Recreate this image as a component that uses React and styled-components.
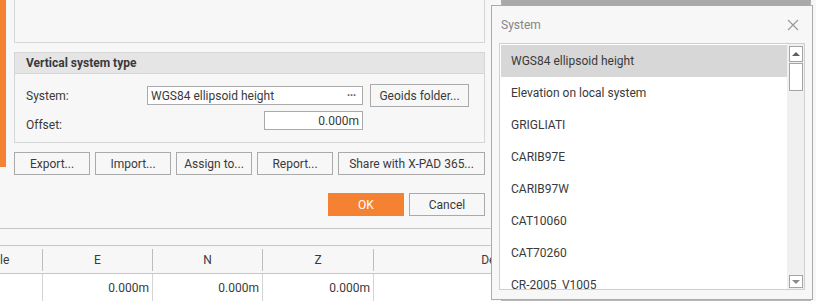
import React from "react";
import styled, { createGlobalStyle } from "styled-components";

const GlobalStyle = createGlobalStyle`
  html, body {
    margin: 0;
    padding: 0;
    background: #f7f7f7;
  }
  * {
    box-sizing: border-box;
  }
`;

const Page = styled.div`
  position: relative;
  width: 816px;
  height: 301px;
  overflow: hidden;
  background: #f7f7f7;
  font-family: Roboto, "Liberation Sans", sans-serif;
  font-size: 12px;
  color: #3a3a3a;
`;

// DIALOG
const Dialog = styled.div`
  width: 491px;
  height: 229px;
  display: flex;
  align-items: flex-start;
  border-bottom: 1px solid #c6c6c6;
`;

const Strip = styled.div`
  width: 6px;
  height: 167px;
  background: #f58233;
  flex-shrink: 0;
`;

const Body = styled.div`
  margin-left: 8px;
  width: 471px;
  display: flex;
  flex-direction: column;
`;

const TopBox = styled.div`
  height: 43px;
  border: 1px solid #d6d6d6;
  border-top: none;
`;

const Group = styled.div`
  margin-top: 9px;
  border: 1px solid #d6d6d6;
`;

const GroupHeader = styled.div`
  height: 21px;
  background: #e5e5e5;
  border-bottom: 1px solid #d6d6d6;
  padding-left: 11px;
  display: flex;
  align-items: center;
  font-weight: bold;
  color: #3a3a3a;
`;

const Fields = styled.div`
  display: grid;
  grid-template-columns: 121px 117px 99px 7px 99px;
  grid-template-rows: 23px 19px;
  row-gap: 4px;
  align-items: center;
  padding: 10px 0 12px 11px;
`;

const Label = styled.div`
  grid-column: 1;
  padding-top: ${(p) => p.shift || 0}px;
`;

const Input = styled.div`
  grid-column: ${(p) => p.col};
  height: 19px;
  background: #fff;
  border: 1px solid #aaaaaa;
  display: flex;
  align-items: center;
  justify-content: ${(p) => (p.right ? "flex-end" : "space-between")};
  padding: 0 3px 0 3px;
  color: #3a3a3a;
`;

const Dots = styled.span`
  color: #666;
  font-size: 12px;
  font-weight: bold;
  letter-spacing: -0.5px;
  margin-right: 3px;
`;

const Button = styled.button`
  width: ${(p) => p.w || 76}px;
  height: 23px;
  padding: 0;
  border: ${(p) => (p.primary ? "none" : "1px solid #aaaaaa")};
  background: ${(p) => (p.primary ? "#f58233" : "#f7f7f7")};
  color: ${(p) => (p.primary ? "#fff" : "#3a3a3a")};
  font-family: Roboto, "Liberation Sans", sans-serif;
  font-size: 12px;
  grid-column: ${(p) => p.col || "auto"};
`;

const ButtonRow = styled.div`
  margin-top: ${(p) => p.top}px;
  display: flex;
  gap: 5px;
  justify-content: ${(p) => (p.end ? "flex-end" : "flex-start")};
`;

// TABLE (scrolled horizontally, clipped where the popup begins)
const Table = styled.div`
  margin-top: 16px;
  width: 491px;
  overflow: hidden;
  border-top: 1px solid #c6c6c6;
`;

const HeaderRow = styled.div`
  display: flex;
  height: 28px;
  align-items: center;
  border-bottom: 1px solid #c6c6c6;
`;

const HeaderCell = styled.div`
  width: ${(p) => p.w}px;
  flex-shrink: 0;
  height: 22px;
  display: flex;
  align-items: center;
  justify-content: ${(p) => (p.left ? "flex-start" : "center")};
  border-right: 1px solid #bdbdbd;
  color: #3a3a3a;
  white-space: nowrap;
`;

const DataRow = styled.div`
  display: flex;
  height: 28px;
  background: #fff;
`;

const DataCell = styled.div`
  width: ${(p) => p.w}px;
  flex-shrink: 0;
  display: flex;
  align-items: center;
  justify-content: flex-end;
  padding-right: 3px;
  border-right: 1px solid #d4d4d4;
`;

// BACKGROUND WINDOW + POPUP
const BackPanel = styled.div`
  position: absolute;
  left: 501px;
  top: 0;
  width: 310px;
  height: 301px;
  background: #f0f0f0;
  border: 1px solid #b8b8b8;
  border-top: 5px solid #a9a9a9;
`;

const Popup = styled.div`
  position: absolute;
  left: 491px;
  top: 5px;
  width: 322px;
  height: 295px;
  background: #f7f7f7;
  border: 1px solid #ababab;
  display: flex;
  flex-direction: column;
`;

const PopupTitle = styled.div`
  height: 37px;
  display: flex;
  align-items: center;
  justify-content: space-between;
  padding: 0 13px 0 9px;
  color: #858585;
`;

const Close = styled.svg`
  width: 12px;
  height: 12px;
`;

const ListBox = styled.div`
  margin: 0 7px;
  height: 247px;
  background: #fff;
  border: 1px solid #cfcfcf;
  display: flex;
`;

const Items = styled.div`
  flex: 1;
  padding: 1px 0 0 1px;
  overflow: hidden;
`;

const Item = styled.div`
  height: 32px;
  display: flex;
  align-items: center;
  padding-left: 10px;
  background: ${(p) => (p.selected ? "#d7d7d7" : "#fff")};
  color: #3a3a3a;
`;

const Scrollbar = styled.div`
  width: 17px;
  background: #f0f0f0;
  display: flex;
  flex-direction: column;
  align-items: center;
  padding: 2px 0 1px;
`;

const ScrollButton = styled.div`
  width: 14px;
  height: ${(p) => p.h}px;
  background: #fff;
  border: 1px solid #a4a4a4;
  display: flex;
  align-items: center;
  justify-content: center;
  margin-top: ${(p) => (p.push ? "auto" : "0")};
`;

const Thumb = styled.div`
  width: 14px;
  height: 28px;
  margin-top: 1px;
  background: #fff;
  border: 1px solid #a4a4a4;
`;

const Arrow = styled.div`
  width: 0;
  height: 0;
  border-left: 4px solid transparent;
  border-right: 4px solid transparent;
  ${(p) =>
    p.down
      ? "border-top: 4px solid #8a8a8a;"
      : "border-bottom: 4px solid #606060;"}
`;

const systems = [
  "WGS84 ellipsoid height",
  "Elevation on local system",
  "GRIGLIATI",
  "CARIB97E",
  "CARIB97W",
  "CAT10060",
  "CAT70260",
  "CR-2005_V1005",
];

const buttons = ["Export...", "Import...", "Assign to...", "Report..."];

const columns = [
  { name: "le", w: 43, left: true },
  { name: "E", w: 110, value: "0.000m" },
  { name: "N", w: 110, value: "0.000m" },
  { name: "Z", w: 111, value: "0.000m" },
  { name: "Description", w: 276 },
];

export default function App() {
  return (
    <Page>
      <GlobalStyle />
      <Dialog>
        <Strip />
        <Body>
          <TopBox />
          <Group>
            <GroupHeader>Vertical system type</GroupHeader>
            <Fields>
              <Label>System:</Label>
              <Input col="2 / 4">
                <span>WGS84 ellipsoid height</span>
                <Dots>···</Dots>
              </Input>
              <Button w={99} col={5}>
                Geoids folder...
              </Button>
              <Label shift={8}>Offset:</Label>
              <Input col={3} right>
                0.000m
              </Input>
            </Fields>
          </Group>
          <ButtonRow top={9}>
            {buttons.map((b) => (
              <Button key={b}>{b}</Button>
            ))}
            <Button w={147}>Share with X-PAD 365...</Button>
          </ButtonRow>
          <ButtonRow top={18} end>
            <Button primary>OK</Button>
            <Button>Cancel</Button>
          </ButtonRow>
        </Body>
      </Dialog>

      <Table>
        <HeaderRow>
          {columns.map((c) => (
            <HeaderCell key={c.name} w={c.w} left={c.left}>
              {c.name}
            </HeaderCell>
          ))}
        </HeaderRow>
        <DataRow>
          {columns.map((c) => (
            <DataCell key={c.name} w={c.w}>
              {c.value || ""}
            </DataCell>
          ))}
        </DataRow>
      </Table>

      <BackPanel />
      <Popup>
        <PopupTitle>
          <span>System</span>
          <Close viewBox="0 0 12 12">
            <path
              d="M1 1 L11 11 M11 1 L1 11"
              stroke="#9a9a9a"
              strokeWidth="1.2"
              fill="none"
            />
          </Close>
        </PopupTitle>
        <ListBox>
          <Items>
            {systems.map((s, i) => (
              <Item key={s} selected={i === 0}>
                {s}
              </Item>
            ))}
          </Items>
          <Scrollbar>
            <ScrollButton h={16}>
              <Arrow />
            </ScrollButton>
            <Thumb />
            <ScrollButton h={13} push>
              <Arrow down />
            </ScrollButton>
          </Scrollbar>
        </ListBox>
      </Popup>
    </Page>
  );
}
